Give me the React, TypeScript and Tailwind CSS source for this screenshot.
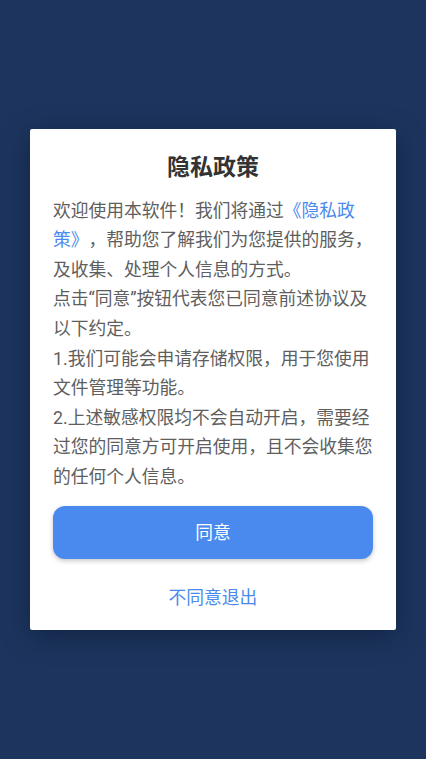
export default function App() {
  return (
    <div className="flex min-h-[759px] w-full items-center justify-center bg-[#1d355e] px-[30px] font-['Roboto','Noto_Sans_CJK_SC',sans-serif] [text-spacing-trim:space-all]">
      <div className="w-[366px] rounded-[2px] bg-white px-[23px] pt-[23px] pb-[20px] shadow-[0_6px_28px_rgba(5,15,35,0.45)]">
        {/* Title */}
        <h1 className="text-center text-[23px] leading-[32px] font-bold text-[#333333]">隐私政策</h1>

        {/* Body */}
        <div className="mt-[13px] text-[17.75px] leading-[29.6px] text-[#5e5e5e]">
          <p>
            欢迎使用本软件！我们将通过<span className="text-[#4a89ee]">《隐私政策》</span>，帮助您了解我们为您提供的服务，及收集、处理个人信息的方式。
          </p>
          <p>点击“同意”按钮代表您已同意前述协议及以下约定。</p>
          <p>1.我们可能会申请存储权限，用于您使用文件管理等功能。</p>
          <p>2.上述敏感权限均不会自动开启，需要经过您的同意方可开启使用，且不会收集您的任何个人信息。</p>
        </div>

        {/* Actions */}
        <button className="mt-[14px] flex h-[53px] w-full items-center justify-center rounded-[12px] bg-[#4a89ee] text-[17.75px] text-white shadow-[0_2px_5px_rgba(0,0,0,0.22)]">
          同意
        </button>
        <div className="mt-[27px] text-center text-[17.75px] leading-[24px] text-[#4a89ee]">不同意退出</div>
      </div>
    </div>
  );
}
